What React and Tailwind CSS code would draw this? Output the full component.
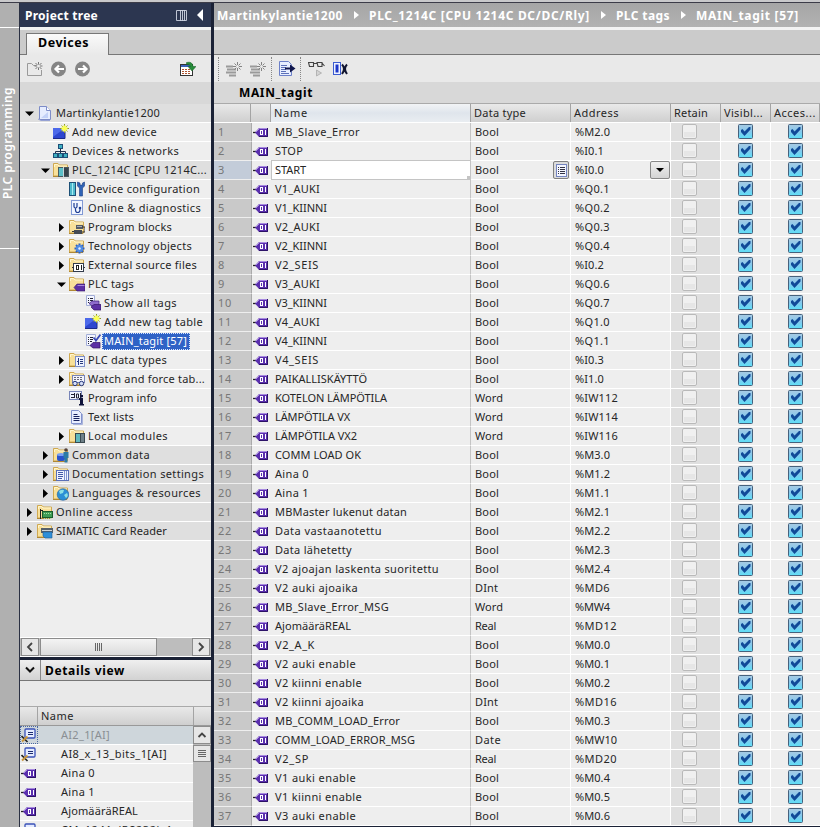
import React, { useLayoutEffect, useRef, useState } from "react";

// Text whose tracking is adjusted so that it spans `w` pixels.
function Fit({ w, vertical, className = "", children }) {
  const ref = useRef(null);
  const [ls, setLs] = useState(0);
  useLayoutEffect(() => {
    const r = ref.current.getBoundingClientRect();
    const natural = vertical ? r.height : r.width;
    setLs((w - natural) / String(children).length);
  }, []);
  return (
    <span ref={ref} className={"whitespace-pre " + className} style={{ letterSpacing: ls + "px" }}>
      {children}
    </span>
  );
}

const Folder = () => (
  <>
    <path d="M.5 14V1.500h4.500l1.500 1.500h8V14z" fill="#f8e09a" stroke="#cfa850" />
    <path d="M1.500 5V2.500h3l1.500 1.500h8" fill="none" stroke="#fff6cf" />
    <path d="M0 14.500h14" stroke="#b08834" />
  </>
);

const Spark = () => (
  <>
    <circle cx="11.500" cy="4.500" r="3.200" fill="#e9f29a" />
    <path d="M11.500 0v9M7 4.500h9M8.500 1.500l6 6M14.500 1.500l-6 6" stroke="#8a962c" strokeWidth="1" />
    <path d="M11.500 1.500v6M8.500 4.500h6M9.500 2.500l4 4M13.500 2.500l-4 4" stroke="#fbff52" strokeWidth="1.100" />
  </>
);

const Globs = {
  project: (
    <>
      <path d="M2.500 1.500h7l4 4v9h-11z" fill="#e6edff" stroke="#7d8cc8" />
      <path d="M9.500 1.500v4h4" fill="#fff" stroke="#7d8cc8" />
      <path d="M4 13L11 7v6z" fill="#c3d2f8" />
      <path d="M1 14l3 1.500h9" stroke="#96a2d4" fill="none" />
    </>
  ),
  add: (
    <>
      <rect x="0" y="4" width="12" height="11" fill="#2d46cf" />
      <path d="M0 4h12L0 13z" fill="#4c69ea" />
      <path d="M0 14.500h12v-10" stroke="#1b2a8c" fill="none" />
      <Spark />
    </>
  ),
  network: (
    <>
      <path d="M7.500 5v4M2.500 11V8.500h10V11M7.500 8v3" stroke="#20304c" fill="none" />
      <rect x="5.500" y="1.500" width="4" height="4" fill="#3fb0c0" stroke="#1d4f78" />
      <rect x=".5" y="10.500" width="4" height="4" fill="#3fb0c0" stroke="#1d4f78" />
      <rect x="5.500" y="10.500" width="4" height="4" fill="#3fb0c0" stroke="#1d4f78" />
      <rect x="10.500" y="10.500" width="4" height="4" fill="#3fb0c0" stroke="#1d4f78" />
    </>
  ),
  plc: (
    <>
      <Folder />
      <rect x="5" y="5" width="11" height="10" fill="#4c5a60" />
      <rect x="6" y="6" width="4" height="8" fill="#5cc0c8" />
      <rect x="11" y="6" width="4" height="8" fill="#39444c" />
      <path d="M10.500 5v10" stroke="#c8d4d8" />
    </>
  ),
  config: (
    <>
      <rect x=".5" y="1.500" width="6" height="13" fill="#4fb9cc" stroke="#1c4f76" />
      <path d="M3.500 2v12" stroke="#a6ebf2" />
      <path d="M8.500 1v4l2 2v8h3V7l2-2V1l-2 1v2h-2.500V2z" fill="#2f63b6" stroke="#193c82" strokeWidth=".6" />
    </>
  ),
  diag: (
    <>
      <rect x="2.500" y=".5" width="11" height="14" fill="#f2f6ff" stroke="#8098d4" />
      <path d="M5 3v3.500q0 1.500 1.500 1.500T8 6.500V3M6.500 8v2q0 2.500 2.200 2.500T11 10V9" stroke="#1f3f94" strokeWidth="1.200" fill="none" />
      <circle cx="11" cy="8" r="1.300" fill="#1f3f94" />
    </>
  ),
  blocks: (
    <>
      <Folder />
      <rect x="7" y="6" width="7" height="4" fill="#555b66" />
      <rect x="5" y="11" width="8" height="4" fill="#454b55" />
      <path d="M3 12.500h2M13 8h3v5h-3" stroke="#333" fill="none" />
      <path d="M8 7.500h5" stroke="#a8aeb8" />
    </>
  ),
  tech: (
    <>
      <Folder />
      <path d="M10.500 5.500v10M5.500 10.500h10M7 7l7 7M14 7l-7 7" stroke="#2f62c4" strokeWidth="2" />
      <circle cx="10.500" cy="10.500" r="3.400" fill="#4d8ce6" />
      <circle cx="10.500" cy="10.500" r="1.200" fill="#e8f0ff" />
    </>
  ),
  ext: (
    <>
      <Folder />
      <rect x="4.500" y="6.500" width="10" height="8" fill="#fff" stroke="#333c4c" />
      <path d="M3 10.500h2M15 10.500h1" stroke="#333" />
      <rect x="7.500" y="8.500" width="2" height="4" fill="none" stroke="#222" />
      <path d="M12.500 8v5" stroke="#222" />
    </>
  ),
  tagsFolder: (
    <>
      <Folder />
      <path d="M5 11.500L8 8h8v7H8z" fill="#5c30a4" stroke="#361668" strokeWidth=".6" />
      <path d="M8.500 9.500h7" stroke="#a888dc" />
    </>
  ),
  showTags: (
    <>
      <path d="M1.500 .5h8v10h-8z" fill="#f4f6ff" stroke="#a3aed8" />
      <path d="M3 3.500h1M5 3.500h3M3 5.500h1M5 5.500h3M3 7.500h1" stroke="#223" />
      <path d="M4 8.500L7 6h7v5H7z" fill="#8f6ccc" stroke="#3c1c78" strokeWidth=".7" />
      <path d="M6 12l3-2.500h7V15H9z" fill="#5c30a4" stroke="#361668" strokeWidth=".7" />
    </>
  ),
  tagTable: (
    <>
      <path d="M1.500 1.500h9v11h-9z" fill="#f4f6ff" stroke="#a3aed8" />
      <path d="M3 4.500h1M5 4.500h3M3 6.500h1M5 6.500h3M3 8.500h1M5 8.500h2M3 10.500h1" stroke="#223" />
      <path d="M8.500 4.500l2.500 3 4.500-6" fill="none" stroke="#3a4ab8" strokeWidth="1.800" />
      <path d="M5 12.500L8 9.500h7V15H8z" fill="#5c30a4" stroke="#361668" strokeWidth=".7" />
    </>
  ),
  types: (
    <>
      <Folder />
      <rect x="6.500" y="4.500" width="9" height="10" fill="#eef2ff" stroke="#7d8ec8" />
      <path d="M9.500 6v7M8 9.500h2M11 7.500h3M11 9.500h3M11 11.500h3" stroke="#26387c" fill="none" />
    </>
  ),
  watch: (
    <>
      <Folder />
      <rect x="3.500" y="4.500" width="12" height="7" fill="#f2f4fc" stroke="#7784b8" />
      <path d="M5 6.500h9M5 8.500h9" stroke="#667" strokeDasharray="2 1" />
      <circle cx="6" cy="12.500" r="2.200" fill="#d4def8" stroke="#26387c" />
      <circle cx="12.500" cy="12.500" r="2.200" fill="#d4def8" stroke="#26387c" />
    </>
  ),
  info: (
    <>
      <rect x=".5" y="1.500" width="12" height="8" fill="#eef2ff" stroke="#7784b8" />
      <path d="M2 4.500h3M2 7.500h3M5.500 3v5M7.500 4h2v4h-2zM11.500 3v5" stroke="#223" fill="none" />
      <path d="M11 8h3v6h1v1.500h-5V14h1v-4h-1V8z" fill="#10143c" />
      <rect x="11" y="5" width="3" height="2.200" fill="#10143c" />
    </>
  ),
  text: (
    <>
      <path d="M2.500 1.500h7l3 3v10h-10z" fill="#e9eeff" stroke="#8292cc" />
      <path d="M4.500 5.500h4M4.500 7.500h6M4.500 9.500h6M4.500 11.500h6" stroke="#16205c" />
      <path d="M13.500 5v10.500H4" stroke="#a9b4dc" fill="none" />
    </>
  ),
  local: (
    <>
      <Folder />
      <rect x="6" y="5" width="10" height="10" fill="#38484f" />
      <rect x="7" y="6" width="4" height="8" fill="#5fb8bd" />
      <rect x="12" y="6" width="3" height="8" fill="#6e8088" />
    </>
  ),
  common: (
    <>
      <Folder />
      <rect x="4" y="7" width="8" height="7" rx="2" fill="#2a53cc" />
      <ellipse cx="8" cy="7.500" rx="4" ry="1.600" fill="#7aa0f2" />
      <circle cx="13" cy="3" r="1.800" fill="#54403a" />
      <path d="M10.500 5h5v6h-1v4.500h-3V11h-1z" fill="#2c7ba6" />
    </>
  ),
  docs: (
    <>
      <Folder />
      <rect x="3.500" y="4.500" width="12" height="10" fill="#f0f3ff" stroke="#5b70b8" />
      <path d="M5 6.500h5M5 8.500h5M5 10.500h5M5 12.500h4" stroke="#445ba8" />
      <path d="M11.500 5v9M13.500 5v9" stroke="#8094d0" />
    </>
  ),
  globe: (
    <>
      <Folder />
      <circle cx="10" cy="9.500" r="5.800" fill="#2b8fd6" stroke="#1d5c9c" strokeWidth=".6" />
      <path d="M6 6q3-2 5-1l-1 3-3 1zM11 10l3-2q2 3-1 5z" fill="#8ce0e4" />
    </>
  ),
  online: (
    <>
      <Folder />
      <path d="M3.500 5v10M3 6.500h3" stroke="#222" />
      <rect x="5.500" y="7.500" width="10" height="6" fill="#3f9e55" stroke="#1a5c2c" />
      <path d="M7 9.500h3M11 9.500h3M7 14.500h8" stroke="#a9e0a9" strokeDasharray="1 1" />
    </>
  ),
  reader: (
    <>
      <Folder />
      <rect x="4" y="5" width="12" height="5" fill="#56606a" />
      <path d="M5 7.500h10" stroke="#cfd6dc" />
      <path d="M6 9h9v6H8l-2-2z" fill="#2f8fd8" stroke="#1c5b98" strokeWidth=".6" />
    </>
  ),
  tag: (
    <>
      <path d="M0 8.500h4" stroke="#222" strokeWidth="1.300" />
      <path d="M2 8.500L6 4h9v9H6z" fill="#5a2fae" />
      <path d="M3 8L6.500 4.500H14" fill="none" stroke="#a88ae0" />
      <path d="M6 12.500h8.500V4" fill="none" stroke="#2c1266" />
      <rect x="7.500" y="6.500" width="2" height="4" fill="none" stroke="#fff" />
      <path d="M12.500 6v5" stroke="#fff" />
    </>
  ),
  block: (
    <>
      <rect x="4" y="2" width="10" height="9" rx="1" fill="#e4ebff" stroke="#3a52b8" strokeWidth="1.300" />
      <path d="M7 5.500h5M7 7.500h5" stroke="#1b2a70" />
      <path d="M.5 9l6 6" stroke="#222" strokeWidth="1.600" />
      <path d="M1 14.500l5.500-5" stroke="#c8963c" strokeWidth="2" />
    </>
  ),
};

const Icon = ({ name }) => (
  <svg viewBox="0 0 16 16" className="h-4 w-4 shrink-0" fill="none">
    {Globs[name]}
  </svg>
);

const TREE = [
  [0, "d", "project", "Martinkylantie1200", 104, 1],
  [1, "", "add", "Add new device", 85, 0],
  [1, "", "network", "Devices & networks", 107, 0],
  [1, "d", "plc", "PLC_1214C [CPU 1214C...", 135, 1],
  [2, "", "config", "Device configuration", 112, 0],
  [2, "", "diag", "Online & diagnostics", 113, 0],
  [2, "r", "blocks", "Program blocks", 84, 0],
  [2, "r", "tech", "Technology objects", 104, 0],
  [2, "r", "ext", "External source files", 109, 0],
  [2, "d", "tagsFolder", "PLC tags", 46, 0],
  [3, "", "showTags", "Show all tags", 73, 0],
  [3, "", "add", "Add new tag table", 99, 0],
  [3, "", "tagTable", "MAIN_tagit [57]", 83, 0, true],
  [2, "r", "types", "PLC data types", 79, 0],
  [2, "r", "watch", "Watch and force tab...", 117, 0],
  [2, "", "info", "Program info", 69, 0],
  [2, "", "text", "Text lists", 46, 0],
  [2, "r", "local", "Local modules", 80, 0],
  [1, "r", "common", "Common data", 78, 1],
  [1, "r", "docs", "Documentation settings", 132, 1],
  [1, "r", "globe", "Languages & resources", 129, 1],
  [0, "r", "online", "Online access", 77, 1],
  [0, "r", "reader", "SIMATIC Card Reader", 111, 1],
];

const INDENT = ["pl-0", "pl-4", "pl-8", "pl-12"];

const TAGS = [
  ["MB_Slave_Error", 85, "Bool", "%M2.0"],
  ["STOP", 28, "Bool", "%I0.1"],
  ["START", 31, "Bool", "%I0.0"],
  ["V1_AUKI", 45, "Bool", "%Q0.1"],
  ["V1_KIINNI", 52, "Bool", "%Q0.2"],
  ["V2_AUKI", 45, "Bool", "%Q0.3"],
  ["V2_KIINNI", 52, "Bool", "%Q0.4"],
  ["V2_SEIS", 44, "Bool", "%I0.2"],
  ["V3_AUKI", 45, "Bool", "%Q0.6"],
  ["V3_KIINNI", 52, "Bool", "%Q0.7"],
  ["V4_AUKI", 45, "Bool", "%Q1.0"],
  ["V4_KIINNI", 52, "Bool", "%Q1.1"],
  ["V4_SEIS", 44, "Bool", "%I0.3"],
  ["PAIKALLISKÄYTTÖ", 92, "Bool", "%I1.0"],
  ["KOTELON LÄMPÖTILA", 112, "Word", "%IW112"],
  ["LÄMPÖTILA VX", 75, "Word", "%IW114"],
  ["LÄMPÖTILA VX2", 82, "Word", "%IW116"],
  ["COMM LOAD OK", 86, "Bool", "%M3.0"],
  ["Aina 0", 34, "Bool", "%M1.2"],
  ["Aina 1", 34, "Bool", "%M1.1"],
  ["MBMaster lukenut datan", 132, "Bool", "%M2.1"],
  ["Data vastaanotettu", 107, "Bool", "%M2.2"],
  ["Data lähetetty", 77, "Bool", "%M2.3"],
  ["V2 ajoajan laskenta suoritettu", 164, "Bool", "%M2.4"],
  ["V2 auki ajoaika", 83, "DInt", "%MD6"],
  ["MB_Slave_Error_MSG", 114, "Word", "%MW4"],
  ["AjomääräREAL", 76, "Real", "%MD12"],
  ["V2_A_K", 40, "Bool", "%M0.0"],
  ["V2 auki enable", 81, "Bool", "%M0.1"],
  ["V2 kiinni enable", 87, "Bool", "%M0.2"],
  ["V2 kiinni ajoaika", 89, "DInt", "%MD16"],
  ["MB_COMM_LOAD_Error", 125, "Bool", "%M0.3"],
  ["COMM_LOAD_ERROR_MSG", 140, "Date", "%MW10"],
  ["V2_SP", 34, "Real", "%MD20"],
  ["V1 auki enable", 81, "Bool", "%M0.4"],
  ["V1 kiinni enable", 87, "Bool", "%M0.5"],
  ["V3 auki enable", 81, "Bool", "%M0.6"],
];

const TYPE_W = { Bool: 24, Word: 28, DInt: 23, Real: 21, Date: 26 };
const addrWidth = (a) =>
  a.startsWith("%IW") ? 43 : a.startsWith("%I") ? 29 : a.startsWith("%Q") ? 35 : a.length === 4 ? 35 : a.includes(".") ? 35 : 42;

const DETAILS = [
  ["block", "AI2_1[AI]", 49],
  ["block", "AI8_x_13_bits_1[AI]", 106],
  ["tag", "Aina 0", 34],
  ["tag", "Aina 1", 34],
  ["tag", "AjomääräREAL", 77],
  ["block", "CM_1241_(RS232)_1", 112],
];

const Arrow = ({ dir }) => (
  <span className="flex w-[17px] shrink-0 items-center justify-center pl-[2px]">
    {dir && (
      <svg viewBox="0 0 9 9" className="h-[9px] w-[9px]">
        <path d={dir === "d" ? "M0 2.500h9L4.500 7z" : "M2 0v9l5-4.500z"} fill="#000" />
      </svg>
    )}
  </span>
);

const Check = ({ on }) => (
  <svg viewBox="0 0 15 15" className="h-[15px] w-[15px] shrink-0">
    {on ? (
      <>
        <rect x=".5" y=".5" width="14" height="14" rx="1" fill="url(#boxFill)" stroke="#46617c" />
        <path d="M3 6l1.500-1 2 2.500L11 3h1.500v2.500L6.500 12 3 8z" fill="#114a98" />
      </>
    ) : (
      <>
        <rect x=".5" y=".5" width="14" height="14" rx="1.500" fill="#f0f0f0" stroke="#b9b9b9" />
        <path d="M2 8h11v5H2z" fill="#e6e6e6" />
      </>
    )}
  </svg>
);

const HEAD = "bg-gradient-to-b from-[#e9e9e9] via-[#dcdcdc] to-[#cfcfcf]";
const COLS = "grid grid-cols-[37px_20px_200px_100px_100px_50px_50px_49px]";

function Head({ children, w, blue }) {
  return (
    <div
      className={
        "flex items-center overflow-hidden border-r border-[#a4a4a4] pl-[3px] " +
        (blue ? "bg-gradient-to-b from-[#f2f4f6] via-[#dfe5ec] to-[#e9edf1]" : "")
      }
    >
      {children && <Fit w={w}>{children}</Fit>}
    </div>
  );
}

function SidebarHeader() {
  return (
    <>
      <div className="flex h-6 shrink-0 items-center bg-[#2c3650] pl-[5px] text-[12px] font-bold text-white">
        <Fit w={73} className="pt-px">Project tree</Fit>
        <svg viewBox="0 0 11 11" className="ml-[78px] h-[11px] w-[11px]" fill="none">
          <path d="M.5.5h10v10H.5zM4.500 0v11M6.500 0v11M8.500 0v11" stroke="#cfd5e2" strokeWidth=".9" />
        </svg>
        <svg viewBox="0 0 6 12" className="ml-[10px] h-3 w-[6px]">
          <path d="M6 0v12L0 6z" fill="#fff" />
        </svg>
      </div>
      <div className="h-[3px] shrink-0 bg-[#f3f3f3]" />
      <div className="flex h-[25px] shrink-0 items-end border-b border-[#777] bg-[#cbcbcb] pl-[6px]">
        <div className="-mb-px flex h-[22px] w-[83px] items-center border border-b-0 border-[#777] bg-gradient-to-b from-[#fafafa] to-[#e9e9e9] pb-[3px] pl-[11px] text-[12.5px] font-bold text-black">
          <Fit w={51}>Devices</Fit>
        </div>
      </div>
      <div className="flex h-[27px] shrink-0 items-center bg-[#e9e9e9] pl-[7px]">
        <svg viewBox="0 0 16 16" className="h-4 w-4" fill="none">
          <path d="M.5 14.500V2.500h4l2 2h3M.5 14.500h14V9" stroke="#9a9a9a" />
          <path d="M11.500 1v8M7.500 5h8M8.500 2l6 6M14.500 2l-6 6" stroke="#777" />
          <circle cx="11.500" cy="5" r="1.500" fill="#eee" />
        </svg>
        {["M13 8H5M8 4.500L4.500 8 8 11.500", "M3 8h8M8 4.500L11.500 8 8 11.500"].map((d) => (
          <svg key={d} viewBox="0 0 16 16" className="ml-2 h-4 w-4" fill="none">
            <circle cx="7.500" cy="8" r="7.500" fill="#858585" />
            <path d={d} stroke="#fff" strokeWidth="2.200" />
          </svg>
        ))}
        <svg viewBox="0 0 16 16" className="ml-[89px] h-4 w-4" fill="none">
          <rect x=".5" y="3.500" width="12" height="11" fill="#fff" stroke="#333" />
          <path d="M1 5h11" stroke="#3b62b8" strokeWidth="2" />
          <path d="M2 8.500h9M2 10.500h9M2 12.500h9" stroke="#b0542e" strokeDasharray="2 1" />
          <path d="M6.500 1.500q6-1.500 6.500 4h3L12 10 8 5.500h2.500Q10 3 6.500 3.500z" fill="#278c3a" stroke="#125c22" strokeWidth=".5" />
        </svg>
      </div>
      <div className="h-[22px] shrink-0 bg-[#d8d8d8]" />
    </>
  );
}

const ScrollBtn = ({ d, h = "h-[18px]" }) => (
  <div className={"flex w-[18px] shrink-0 items-center justify-center border border-[#8c8c8c] bg-[#e6e6e6] " + h}>
    <svg viewBox="0 0 10 10" className="h-[10px] w-[10px]" fill="none">
      <path d={d} stroke="#444" strokeWidth="1.800" />
    </svg>
  </div>
);

function Details() {
  return (
    <>
      <div className="h-[3px] shrink-0 bg-[#1b2236]" />
      <div className="flex h-[21px] shrink-0 items-stretch border-b border-[#777] bg-gradient-to-b from-[#efefef] to-[#d2d2d2]">
        <div className="flex w-[21px] items-center justify-center border-r border-[#888]">
          <svg viewBox="0 0 10 8" className="h-2 w-[10px]" fill="none">
            <path d="M1 1.500l4 4 4-4" stroke="#111" strokeWidth="2" />
          </svg>
        </div>
        <div className="flex items-center pl-1 pt-px text-[12px] font-bold text-black">
          <Fit w={80}>Details view</Fit>
        </div>
      </div>
      <div className="h-[25px] shrink-0 bg-[#e9e9e9]" />
      <div className={"flex h-5 shrink-0 border-y border-t-[#aaa] border-b-[#999] " + HEAD}>
        <div className="w-[18px] border-r border-[#a4a4a4]" />
        <div className="flex w-[156px] items-center border-r border-[#a4a4a4] pl-[3px]">
          <Fit w={33}>Name</Fit>
        </div>
      </div>
      <div className="flex min-h-0 flex-1 overflow-hidden">
        <div className="w-[173px] shrink-0">
          {DETAILS.map(([icon, name, w], i) => (
            <div
              key={name}
              className={
                "flex h-[19px] items-center border-b border-white " +
                (i === 0 ? "bg-[#ced6db] text-[#8a8f93]" : "bg-[#eee]")
              }
            >
              <span className={"flex h-[18px] w-[18px] items-center " + (i === 0 ? "border border-dotted border-[#4a66a0]" : "pl-px")}>
                <Icon name={icon} />
              </span>
              <span className="pl-[23px]">
                <Fit w={w}>{name}</Fit>
              </span>
            </div>
          ))}
        </div>
        <div className="flex flex-1 flex-col bg-[#bdbdbd]">
          <ScrollBtn d="M1.500 7L5 3.500 8.500 7" />
          <div className="mt-px flex h-[17px] w-[18px] shrink-0 flex-col items-center justify-center gap-px border border-[#8c8c8c] bg-[#e6e6e6]">
            {[0, 1, 2, 3].map((i) => (
              <span key={i} className="h-px w-2 bg-[#666]" />
            ))}
          </div>
        </div>
      </div>
    </>
  );
}

function Sidebar() {
  return (
    <div className="flex w-[191px] shrink-0 flex-col overflow-hidden bg-[#eee]">
      <SidebarHeader />
      <div className="h-[533px] shrink-0">
        {TREE.map(([lvl, arrow, icon, name, w, dark, sel]) => (
          <div
            key={name}
            className={"flex h-[19px] items-center border-b border-white " + INDENT[lvl] + (dark ? " bg-[#dfdfdf]" : " bg-[#eee]")}
          >
            <Arrow dir={arrow} />
            <Icon name={icon} />
            {sel ? (
              <span className="ml-px flex h-[17px] w-[88px] items-center border border-dotted border-[#d8e4ff] bg-[#2f62c6] pl-px text-white">
                <Fit w={w}>{name}</Fit>
              </span>
            ) : (
              <span className="pl-[3px]">
                <Fit w={w}>{name}</Fit>
              </span>
            )}
          </div>
        ))}
      </div>
      <div className="flex h-5 shrink-0 items-center border-y border-white bg-[#bdbdbd] px-px">
        <ScrollBtn d="M7 1L3 5l4 4" />
        <div className="ml-px flex h-[18px] w-[117px] items-center justify-center gap-px border border-[#8c8c8c] bg-gradient-to-b from-[#f4f4f4] to-[#dcdcdc]">
          {[0, 1, 2, 3].map((i) => (
            <span key={i} className="h-2 w-px bg-[#666]" />
          ))}
        </div>
        <div className="ml-auto">
          <ScrollBtn d="M3 1l4 4-4 4" />
        </div>
      </div>
      <Details />
    </div>
  );
}

const Crumb = ({ w, children, first }) => (
  <>
    {!first && (
      <svg viewBox="0 0 5 8" className="ml-[11px] mr-[10px] h-2 w-[5px]">
        <path d="M0 0v8l5-4z" fill="#fff" />
      </svg>
    )}
    <Fit w={w} className="pt-px">{children}</Fit>
  </>
);

const Sep = () => <span className="h-6 w-px border-l border-dotted border-[#888]" />;

const Rows = ({ className }) => (
  <svg viewBox="0 0 16 16" className={"h-4 w-4 " + className} fill="none">
    <path d="M0 5.500h7M1 8.500h9M0 11.500h10M3 14.500h7" stroke="#9a9a9a" strokeWidth="2" />
    <path d="M11.500 1v9M7 5.500h9M8.500 2.500l6 6M14.500 2.500l-6 6" stroke="#777" strokeWidth=".9" />
    <circle cx="11.500" cy="5.500" r="1.500" fill="#eee" />
  </svg>
);

function Toolbar() {
  return (
    <div className="flex h-[27px] shrink-0 items-center bg-[#e9e9e9] pl-1">
      <Sep />
      <Rows className="ml-[7px]" />
      <Rows className="ml-2" />
      <span className="ml-[5px] flex">
        <Sep />
      </span>
      <svg viewBox="0 0 17 16" className="ml-[7px] h-4 w-[17px]" fill="none">
        <path d="M.5.500h9l3 3v11H.5z" fill="#e7eeff" stroke="#6c80c8" />
        <path d="M2 4.500h6M2 6.500h5M2 8.500h5M2 10.500h5M2 12.500h8" stroke="#5c70b8" />
        <path d="M6 7.500h6" stroke="#10164c" strokeWidth="2" />
        <path d="M11 3.500v8l5.500-4z" fill="#10164c" />
      </svg>
      <span className="ml-[4px] flex">
        <Sep />
      </span>
      <svg viewBox="0 0 17 16" className="ml-[7px] h-4 w-[17px]" fill="none">
        <path d="M.5 1.500h5v4h-4zM9 1.500h5v4h-4zM5.500 2.500H9M14 2l2.500 3" stroke="#444" strokeWidth="1.100" />
        <path d="M8.500 9v6l5-3z" fill="#d4d4d4" stroke="#aaa" strokeWidth=".8" />
      </svg>
      <svg viewBox="0 0 15 15" className="ml-2 h-[15px] w-[15px]" fill="none">
        <rect x=".5" y="1.500" width="7" height="12" fill="#eef2ff" stroke="#3c5cd0" />
        <path d="M4 3.500v8" stroke="#1c36c8" strokeWidth="3" />
        <path d="M9 3.500q4 4 0 9.500M14 3.500q-4 4 0 9.500" stroke="#101430" strokeWidth="2" />
      </svg>
    </div>
  );
}

function TagRow({ tag, n }) {
  const [name, w, type, addr] = tag;
  const active = n === 3;
  return (
    <div className={"h-[19px] shrink-0 " + COLS}>
      <div className={"flex items-center border-b border-[#eee] pl-1 text-[#777] " + (active ? "bg-[#c3ccd9]" : "bg-[#c9c9c9]")}>
        <Fit w={n > 9 ? 14 : 7}>{n}</Fit>
      </div>
      <div className="flex items-center border-b border-l border-b-white border-l-[#aaa] bg-[#eee] pl-px">
        <Icon name="tag" />
      </div>
      <div
        className={
          active
            ? "-mt-px flex items-center border border-[#c4c4c4] bg-white pl-[3px]"
            : "flex items-center border-b border-r border-b-white border-r-[#c4c4c4] bg-[#eee] pl-1"
        }
      >
        <Fit w={w}>{name}</Fit>
        {active && <span className="-mb-px -mr-px ml-auto h-1 w-1 self-end bg-[#c4c4c4]" />}
      </div>
      <div className="flex items-center justify-between border-b border-r border-white bg-[#eee] pl-1">
        <Fit w={TYPE_W[type]}>{type}</Fit>
        {active && (
          <span className="mr-px flex h-[18px] w-4 items-center justify-center rounded-[2px] border border-[#808080] bg-[#dcdcdc]">
            <svg viewBox="0 0 11 13" className="h-[13px] w-[11px]" fill="none">
              <rect x=".5" y=".5" width="10" height="12" fill="#f4f6ff" stroke="#7484c0" />
              <path d="M2 3.500h1M4 3.500h5M2 5.500h1M4 5.500h5M2 7.500h1M4 7.500h5M2 9.500h1M4 9.500h5" stroke="#334" />
            </svg>
          </span>
        )}
      </div>
      <div className="flex items-center justify-between border-b border-r border-white bg-[#eee] pl-1">
        <Fit w={addrWidth(addr)}>{addr}</Fit>
        {active && (
          <span className="flex h-[18px] w-5 items-center justify-center rounded-[2px] border border-[#888] bg-gradient-to-b from-[#f0f0f0] to-[#d4d4d4]">
            <svg viewBox="0 0 8 4" className="h-1 w-2">
              <path d="M0 0h8L4 4z" fill="#000" />
            </svg>
          </span>
        )}
      </div>
      <div className="flex items-start border-b border-r border-white bg-[#dfdfdf] pl-[11px] pt-px">
        <Check />
      </div>
      <div className="flex items-start border-b border-r border-white bg-[#eee] pl-[17px] pt-px">
        <Check on />
      </div>
      <div className="flex items-start border-b border-white bg-[#eee] pl-[17px] pt-px">
        <Check on />
      </div>
    </div>
  );
}

function Editor() {
  return (
    <div className="flex min-w-0 flex-1 flex-col overflow-hidden bg-[#eee]">
      <div className="flex h-6 shrink-0 items-center bg-gradient-to-b from-[#a6a6a6] to-[#b2b2b2] pl-[3px] text-[12px] font-bold text-white">
        <Crumb first w={126}>Martinkylantie1200</Crumb>
        <Crumb w={221}>PLC_1214C [CPU 1214C DC/DC/Rly]</Crumb>
        <Crumb w={54}>PLC tags</Crumb>
        <Crumb w={103}>MAIN_tagit [57]</Crumb>
      </div>
      <div className="h-[3px] shrink-0 bg-[#f3f3f3]" />
      <div className="h-[25px] shrink-0 border-b border-[#777] bg-[#cbcbcb]" />
      <Toolbar />
      <div className="flex h-[21px] shrink-0 items-center bg-[#d8d8d8] pl-[25px] text-[12px] font-bold text-black">
        <Fit w={74}>MAIN_tagit</Fit>
      </div>
      <div className={"h-5 shrink-0 border-b border-t border-b-white border-t-[#aaa] " + HEAD + " " + COLS}>
        <Head />
        <Head />
        <Head w={34} blue>Name</Head>
        <Head w={52}>Data type</Head>
        <Head w={45}>Address</Head>
        <Head w={34}>Retain</Head>
        <Head w={39}>Visibl...</Head>
        <Head w={42}>Acces...</Head>
      </div>
      {TAGS.map((t, i) => (
        <TagRow key={i} tag={t} n={i + 1} />
      ))}
      <div className="h-[2px] shrink-0 bg-[#1b2236]" />
    </div>
  );
}

export default function App() {
  return (
    <div className="flex h-[827px] w-[820px] flex-col overflow-hidden bg-[#c9c9cb] pt-[2px] font-['Noto_Sans','Open_Sans',sans-serif] text-[11px] leading-[14px] text-[#262626]">
      <svg className="absolute h-0 w-0">
        <defs>
          <linearGradient id="boxFill" x1="0" y1="0" x2="0" y2="1">
            <stop offset="0" stopColor="#a8cbe4" />
            <stop offset=".5" stopColor="#86c8ec" />
            <stop offset="1" stopColor="#5ce0f8" />
          </linearGradient>
        </defs>
      </svg>
      <div className="flex min-h-0 flex-1 border-t border-[#3c3c48]">
        <div className="flex w-[19px] shrink-0 flex-col bg-[#b0b0b0]">
          <div className="h-[25px] border-b border-white" />
          <div className="flex h-[221px] flex-col items-center justify-end border-b border-white pb-[49px] pr-[4px] text-[12px] font-semibold text-white">
            <Fit w={112} vertical className="rotate-180 [writing-mode:vertical-rl]">
              PLC programming
            </Fit>
          </div>
        </div>
        <div className="w-px shrink-0 bg-[#2a3042]" />
        <Sidebar />
        <div className="w-[3px] shrink-0 bg-[#1b2236]" />
        <Editor />
      </div>
    </div>
  );
}
